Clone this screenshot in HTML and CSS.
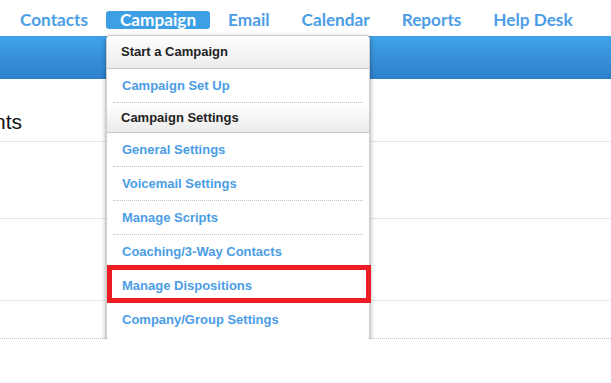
FILE: index.html
```html
<!DOCTYPE html>
<html lang="en">
<head>
    <meta charset="UTF-8">
    <meta name="viewport" content="width=device-width, initial-scale=1.0">
    <title>Campaign menu</title>
    <link rel="stylesheet" href="styles.css">
</head>
<body>

<nav class="topnav">
    <a href="#" class="nav-item">Contacts</a>
    <a href="#" class="nav-item active">Campaign</a>
    <a href="#" class="nav-item">Email</a>
    <a href="#" class="nav-item">Calendar</a>
    <a href="#" class="nav-item">Reports</a>
    <a href="#" class="nav-item">Help Desk</a>
</nav>
<div class="bar"></div>

<div class="content">
    <div class="page-head">
        <h1 class="page-title"><span>Accounts</span></h1>
    </div>
    <div class="row row-a"></div>
    <div class="row row-b"></div>
    <div class="row row-c"></div>
</div>

<!-- выпадающее меню кампании -->
<div class="dropdown">
    <div class="menu-head">Start a Campaign</div>
    <a href="#" class="menu-item">Campaign Set Up</a>
    <div class="menu-head">Campaign Settings</div>
    <a href="#" class="menu-item">General Settings</a>
    <a href="#" class="menu-item">Voicemail Settings</a>
    <a href="#" class="menu-item">Manage Scripts</a>
    <a href="#" class="menu-item">Coaching/3-Way Contacts</a>
    <a href="#" class="menu-item marked">Manage Dispositions</a>
    <a href="#" class="menu-item">Company/Group Settings</a>
</div>

</body>
</html>
```

FILE: styles.css
```css
body {
    margin: 0;
    font-family: "Liberation Sans", Arial, sans-serif;
    background-color: #fff;
    color: #222;
    position: relative;
}
.topnav {
    height: 36px;
    display: flex;
    align-items: center;
    gap: 4px;
    padding-left: 6px;
    padding-top: 4px;
    box-sizing: border-box;
}
.nav-item {
    font-family: Lato, "Open Sans", sans-serif;
    font-weight: 700;
    font-size: 17.2px;
    line-height: 18px;
    padding: 0 14px;
    color: #4a9de6;
    text-decoration: none;
    border-radius: 3px;
}
.nav-item.active {
    background-color: #3d9fe6;
    color: #fff;
}
.bar {
    height: 43px;
    background: linear-gradient(#3fa3e9, #2e7fcb);
}
.page-head {
    padding: 31px 0 7px;
    border-bottom: 1px solid #e6e6e6;
}
.page-title {
    margin: 0;
    width: 22px;
    display: flex;
    justify-content: flex-end;
    overflow: hidden;
    white-space: nowrap;
    font-size: 21px;
    line-height: 24px;
    font-weight: normal;
    color: #111;
}
.row {
    border-bottom: 1px solid #e6e6e6;
}
.row-a {
    height: 76px;
}
.row-b {
    height: 81px;
}
.row-c {
    height: 37px;
    border-bottom: 1px dotted #c4c4c4;
}
.dropdown {
    position: absolute;
    left: 106px;
    top: 35px;
    width: 264px;
    box-sizing: border-box;
    background-color: #fff;
    border: 1px solid #cdcdcd;
    border-radius: 4px;
    box-shadow: 0 2px 5px rgba(0, 0, 0, 0.4);
    padding-bottom: 4px;
}
.menu-head {
    height: 29px;
    line-height: 29px;
    padding-left: 14px;
    font-size: 13px;
    font-weight: 700;
    color: #222;
    background: linear-gradient(#fff, #ebebeb);
    border-bottom: 1px solid #c9c9c9;
}
.menu-head:first-child {
    height: 32px;
    line-height: 32px;
    border-radius: 4px 4px 0 0;
}
.menu-item {
    display: block;
    height: 33px;
    line-height: 33px;
    margin: 0 6px;
    padding-left: 9px;
    font-size: 13px;
    font-weight: 700;
    color: #4a9de6;
    text-decoration: none;
    border-bottom: 1px dotted #c4c4c4;
}
.menu-item:last-child {
    border-bottom: none;
}
.marked {
    position: relative;
}
/* червона рамка-виділення */
.marked::after {
    content: "";
    position: absolute;
    top: -4px;
    bottom: -1px;
    left: -6px;
    right: -8px;
    border: 5px solid #ed1c24;
}
```
